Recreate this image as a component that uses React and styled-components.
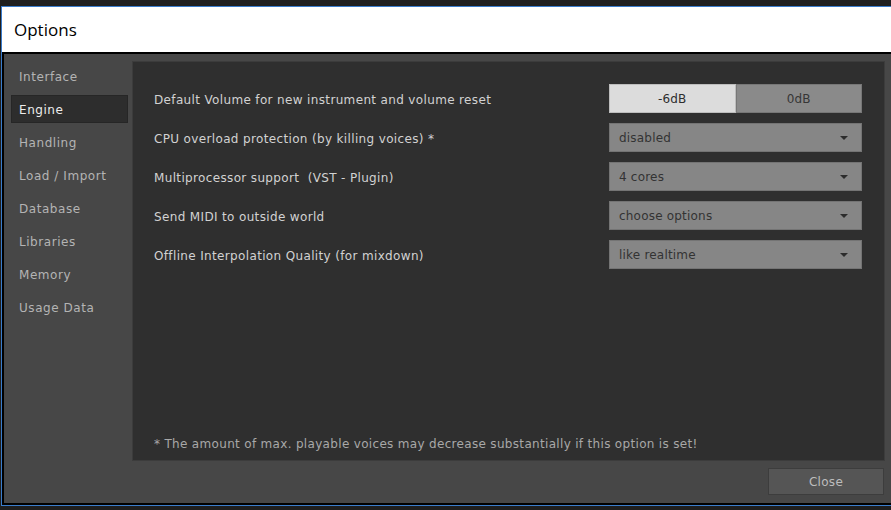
import React from "react";
import styled, { createGlobalStyle } from "styled-components";

const Global = createGlobalStyle`
  html, body { margin: 0; padding: 0; background: #1f1f1f; overflow: hidden; }
  body { font-family: "DejaVu Sans", "Liberation Sans", sans-serif; }
`;

const Window = styled.div`
  margin: 6px 0 0 1px;
  width: 900px;
  border-top: 1px solid #3a7ccb;
  border-left: 1px solid #3a7ccb;
  border-bottom: 1px solid #3a7ccb;
  display: flex;
  flex-direction: column;
`;

const TitleBar = styled.div`
  height: 45px;
  background: #ffffff;
  display: flex;
  align-items: center;
  padding-left: 12px;
  font-family: "Open Sans", "Noto Sans", sans-serif;
  font-size: 17px;
  color: #000;
  box-sizing: border-box;
`;

const Body = styled.div`
  background: #474747;
  border-top: 2px solid #000;
  border-left: 2px solid #000;
  border-bottom: 2px solid #000;
  height: 453px;
  box-sizing: border-box;
  display: grid;
  grid-template-columns: 128px 753px;
  grid-template-rows: 400px auto;
  row-gap: 7px;
  padding-top: 7px;
`;

const Sidebar = styled.nav`
  display: flex;
  flex-direction: column;
  gap: 5px;
  padding: 1px 4px 0 7px;
`;

const NavItem = styled.div`
  height: 28px;
  box-sizing: border-box;
  display: flex;
  align-items: center;
  padding: 1px 0 0 7px;
  font-size: 12px;
  letter-spacing: 0.55px;
  color: ${(p) => (p.$active ? "#ececec" : "#b4b4b4")};
  background: ${(p) => (p.$active ? "#2d2d2d" : "transparent")};
  border: 1px solid ${(p) => (p.$active ? "#262626" : "transparent")};
`;

const Panel = styled.section`
  background: #2f2f2f;
  border: 1px solid #3c3c3c;
  box-sizing: border-box;
  display: flex;
  flex-direction: column;
  padding: 22px 22px 9px 21px;
`;

const Rows = styled.div`
  display: flex;
  flex-direction: column;
  gap: 10px;
  flex: 1;
`;

const Row = styled.div`
  display: flex;
  align-items: center;
  justify-content: space-between;
  height: 29px;
`;

const Label = styled.span`
  font-size: 12px;
  letter-spacing: 0.35px;
  color: #d2d2d2;
  white-space: pre;
  padding-top: 2px;
`;

const Segmented = styled.div`
  display: flex;
  width: 253px;
  height: 29px;
`;

const Segment = styled.div`
  flex: 1;
  display: flex;
  align-items: center;
  justify-content: center;
  font-size: 12px;
  letter-spacing: 0.2px;
  box-sizing: border-box;
  background: ${(p) => (p.$on ? "#dcdcdc" : "#8a8a8a")};
  color: ${(p) => (p.$on ? "#2e2e2e" : "#363636")};
  border: 1px solid ${(p) => (p.$on ? "#bdbdbd" : "#777")};
`;

const Select = styled.div`
  width: 253px;
  height: 29px;
  box-sizing: border-box;
  background: #868686;
  border: 1px solid #747474;
  display: flex;
  align-items: center;
  justify-content: space-between;
  padding: 1px 13px 0 9px;
  font-size: 12px;
  letter-spacing: 0.2px;
  color: #333;
`;

const Arrow = styled.svg`
  width: 8px;
  height: 4px;
  display: block;
`;

const Footnote = styled.div`
  font-size: 12px;
  letter-spacing: 0.32px;
  color: #a8a8a8;
`;

const Footer = styled.div`
  grid-column: 2;
  display: flex;
  justify-content: flex-end;
  padding-right: 1px;
`;

const CloseButton = styled.button`
  width: 116px;
  height: 27px;
  background: #555555;
  border: 1px solid #3d3d3d;
  color: #bdbdbd;
  font-family: "DejaVu Sans", "Liberation Sans", sans-serif;
  font-size: 12px;
  letter-spacing: 0.3px;
  padding: 0;
  cursor: pointer;
`;

const DropArrow = () => (
  <Arrow viewBox="0 0 8 4">
    <path d="M0 0 H8 L4 4 Z" fill="#2c2c2c" />
  </Arrow>
);

const nav = [
  "Interface",
  "Engine",
  "Handling",
  "Load / Import",
  "Database",
  "Libraries",
  "Memory",
  "Usage Data",
];

const selects = [
  ["CPU overload protection (by killing voices) *", "disabled"],
  ["Multiprocessor support  (VST - Plugin)", "4 cores"],
  ["Send MIDI to outside world", "choose options"],
  ["Offline Interpolation Quality (for mixdown)", "like realtime"],
];

export default function App() {
  return (
    <>
      <Global />
      <Window>
        <TitleBar>Options</TitleBar>
        <Body>
          <Sidebar>
            {nav.map((n) => (
              <NavItem key={n} $active={n === "Engine"}>
                {n}
              </NavItem>
            ))}
          </Sidebar>
          <Panel>
            <Rows>
              <Row>
                <Label>Default Volume for new instrument and volume reset</Label>
                <Segmented>
                  <Segment $on>-6dB</Segment>
                  <Segment>0dB</Segment>
                </Segmented>
              </Row>
              {selects.map(([l, v]) => (
                <Row key={l}>
                  <Label>{l}</Label>
                  <Select>
                    <span>{v}</span>
                    <DropArrow />
                  </Select>
                </Row>
              ))}
            </Rows>
            <Footnote>
              * The amount of max. playable voices may decrease substantially if this option is set!
            </Footnote>
          </Panel>
          <Footer>
            <CloseButton>Close</CloseButton>
          </Footer>
        </Body>
      </Window>
    </>
  );
}
